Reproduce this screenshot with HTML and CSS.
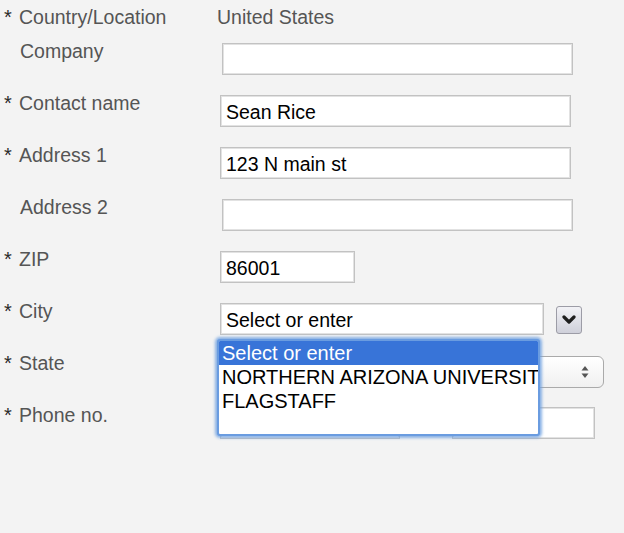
FILE: index.html
```html
<!DOCTYPE html>
<html>
<head>
<meta charset="utf-8">
<link rel="stylesheet" href="styles.css">
</head>
<body>
<div class="form">
  <div class="row row-first">
    <div class="label"><span class="star">*</span>Country/Location</div>
    <div class="field"><span class="static">United States</span></div>
  </div>
  <div class="row">
    <div class="label"><span class="nostar"></span>Company</div>
    <div class="field"><div class="input wide shift"></div></div>
  </div>
  <div class="row">
    <div class="label"><span class="star">*</span>Contact name</div>
    <div class="field"><div class="input wide">Sean Rice</div></div>
  </div>
  <div class="row">
    <div class="label"><span class="star">*</span>Address 1</div>
    <div class="field"><div class="input wide">123 N main st</div></div>
  </div>
  <div class="row">
    <div class="label"><span class="nostar"></span>Address 2</div>
    <div class="field"><div class="input wide shift"></div></div>
  </div>
  <div class="row">
    <div class="label"><span class="star">*</span>ZIP</div>
    <div class="field"><div class="input zip">86001</div></div>
  </div>
  <div class="row">
    <div class="label"><span class="star">*</span>City</div>
    <div class="field city">
      <div class="input cityin">Select or enter</div>
      <div class="ddbtn">
        <svg width="14" height="10" viewBox="0 0 14 10"><polyline points="2,2 7,7 12,2" fill="none" stroke="#1e1e1e" stroke-width="3.2" stroke-linecap="round" stroke-linejoin="round"/></svg>
      </div>
      <div class="listbox">
        <div class="opt sel">Select or enter</div>
        <div class="opt">NORTHERN ARIZONA UNIVERSITY</div>
        <div class="opt">FLAGSTAFF</div>
      </div>
    </div>
  </div>
  <div class="row">
    <div class="label"><span class="star">*</span>State</div>
    <div class="field">
      <div class="select">
        <svg class="updown" width="8" height="14" viewBox="0 0 8 14"><polygon points="4,1 7.5,5.5 0.5,5.5" fill="#555"/><polygon points="4,13 7.5,8.5 0.5,8.5" fill="#555"/></svg>
      </div>
    </div>
  </div>
  <div class="row">
    <div class="label"><span class="star">*</span>Phone no.</div>
    <div class="field phone">
      <div class="input ph1"></div>
      <span class="dash">-</span>
      <div class="input ph2"></div>
    </div>
  </div>
</div>
</body>
</html>
```

FILE: styles.css
```css
html, body {
  margin: 0;
  padding: 0;
}
body {
  background: #f3f3f3;
  font-family: "Liberation Sans", Arial, Helvetica, sans-serif;
  width: 624px;
  height: 533px;
  overflow: hidden;
}
.form {
  display: flex;
  flex-direction: column;
}
.row {
  display: grid;
  grid-template-columns: 220px 1fr;
  height: 52px;
  box-sizing: border-box;
  padding-top: 1px;
}
.row-first {
  height: 42px;
  padding-top: 6px;
}
.label {
  font-size: 19.5px;
  line-height: 22px;
  color: #555;
  padding-left: 4px;
  margin-top: -3px;
  white-space: nowrap;
}
.row-first .label {
  margin-top: 0;
}
.star {
  display: inline-block;
  width: 15px;
  color: #2a2a2a;
  font-size: 20px;
}
.nostar {
  display: inline-block;
  width: 16px;
}
.field {
  position: relative;
}
.static {
  display: block;
  margin-left: -3px;
  font-size: 19.5px;
  line-height: 22px;
  color: #555;
}
.input {
  box-sizing: border-box;
  height: 32px;
  background: #fff;
  border: 1px solid #c2c2c2;
  box-shadow: inset 0 0 0 1px #e2e2e2;
  font-size: 19.5px;
  line-height: 32px;
  padding-left: 5px;
  color: #000;
  white-space: nowrap;
  overflow: hidden;
}
.wide { width: 351px; }
.shift { margin-left: 2px; }
.zip { width: 135px; }
.city {
  display: flex;
  align-items: flex-start;
}
.cityin { width: 324px; }
.ddbtn {
  box-sizing: border-box;
  width: 26px;
  height: 28px;
  margin-left: 12px;
  margin-top: 3px;
  border: 1px solid #9c9ca6;
  border-radius: 3px;
  background: linear-gradient(#f2f2f6, #cfd0da);
  display: flex;
  align-items: center;
  justify-content: center;
}
.listbox {
  position: absolute;
  left: -3px;
  top: 36px;
  box-sizing: border-box;
  width: 323px;
  height: 97px;
  background: #fff;
  border: 2px solid #6a9ce0;
  box-shadow: 0 0 3px 2px rgba(110, 160, 225, 0.8);
  border-radius: 3px;
  overflow: hidden;
  z-index: 5;
}
.opt {
  font-size: 20px;
  line-height: 24px;
  height: 24px;
  padding-left: 3px;
  color: #000;
  white-space: nowrap;
}
.opt.sel {
  background: #3874d8;
  color: #fff;
}
.select {
  position: relative;
  box-sizing: border-box;
  width: 384px;
  height: 32px;
  margin-top: 1px;
  border: 1px solid #aaa;
  border-radius: 6px;
  background: linear-gradient(#ffffff, #f0f0f0);
}
.updown {
  position: absolute;
  right: 14px;
  top: 8px;
}
.phone {
  display: flex;
  align-items: flex-start;
}
.ph1 { width: 180px; }
.dash {
  width: 52px;
  text-align: center;
  font-size: 19px;
  line-height: 32px;
  color: #555;
}
.ph2 { width: 143px; }
```
